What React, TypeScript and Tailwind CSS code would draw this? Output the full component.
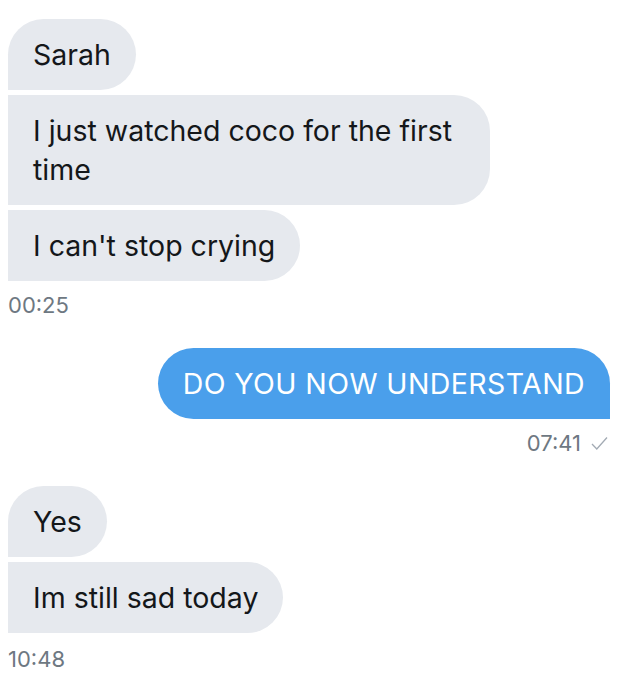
const font = { fontFamily: "Inter, 'Noto Sans', sans-serif" };

function Received({ children, shape, wide }: { children: React.ReactNode; shape: string; wide?: boolean }) {
  return (
    <div
      className={`bg-[#e6e9ee] text-[#14171a] text-[28.5px] leading-[39px] px-[25px] py-[16px] ${shape} ${wide ? "w-[482px]" : "w-fit"}`}
    >
      {children}
    </div>
  );
}

export default function App() {
  return (
    <div className="bg-white w-[641px] h-[679px] overflow-hidden pt-[19px] pl-[8px] pr-[31px]" style={font}>
      <div className="flex flex-col gap-[5px]">
        <Received shape="rounded-[36px] rounded-bl-none">Sarah</Received>
        <Received shape="rounded-r-[36px]" wide>
          I just watched coco for the first time
        </Received>
        <Received shape="rounded-r-[36px]">I can't stop crying</Received>
      </div>
      <div className="mt-[12px] text-[22px] leading-[24px] text-[#6e7882]">00:25</div>

      <div className="mt-[31px] flex justify-end">
        <div className="bg-[#4a9feb] text-white text-[28.5px] leading-[39px] tracking-[0.4px] px-[25px] py-[16px] rounded-[36px] rounded-br-none">
          DO YOU NOW UNDERSTAND
        </div>
      </div>
      <div className="mt-[12px] flex justify-end items-center gap-[10px] pr-[2px] text-[22px] leading-[24px] text-[#6e7882]">
        <span>07:41</span>
        <svg width="17" height="15" viewBox="0 0 17 15" fill="none" stroke="#a3abb4" strokeWidth="1.3">
          <path d="M1 8 L5.8 13 L16 1.5" />
        </svg>
      </div>

      <div className="mt-[31px] flex flex-col gap-[5px]">
        <Received shape="rounded-[36px] rounded-bl-none">Yes</Received>
        <Received shape="rounded-r-[36px]">Im still sad today</Received>
      </div>
      <div className="mt-[14px] text-[22px] leading-[24px] text-[#6e7882]">10:48</div>
    </div>
  );
}
